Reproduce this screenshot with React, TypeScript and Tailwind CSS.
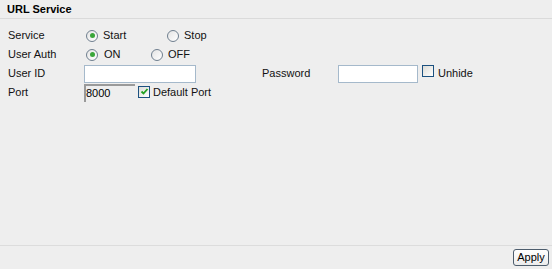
import React from "react";

function Radio({ checked }: { checked?: boolean }) {
  return (
    <span className="inline-flex w-[12px] h-[12px] rounded-full border border-[#6f7f8f] bg-gradient-to-br from-[#e4e4e4] to-white items-center justify-center shrink-0">
      {checked && <span className="w-[5px] h-[5px] rounded-full bg-[#3aa63a]" />}
    </span>
  );
}

function Check({ checked }: { checked?: boolean }) {
  return (
    <span className="inline-flex w-[12px] h-[12px] border border-[#1c5180] bg-gradient-to-br from-[#dcdcd7] to-white items-center justify-center shrink-0">
      {checked && (
        <svg width="9" height="9" viewBox="0 0 9 9">
          <path d="M1.5 4.5 L3.5 6.5 L7.5 2" stroke="#21a121" strokeWidth="1.8" fill="none" />
        </svg>
      )}
    </span>
  );
}

export default function App() {
  return (
    <div className="w-[559px] h-[271px] bg-white" style={{ fontFamily: '"Liberation Sans", Arial, sans-serif' }}>
      <div className="w-[552px] h-[269px] bg-[#eeeeee] flex flex-col text-[11px] text-[#111]">
        <div className="h-[19px] px-[7px] flex items-center font-bold border-b border-[#dadada] text-black">URL Service</div>
        <div className="flex-1 pt-[7px] px-[8px] flex flex-col">
          <div className="h-[19px] flex items-center">
            <span className="w-[78px]">Service</span>
            <Radio checked />
            <span className="ml-[5px] w-[64px]">Start</span>
            <Radio />
            <span className="ml-[5px]">Stop</span>
          </div>
          <div className="h-[19px] flex items-center">
            <span className="w-[78px]">User Auth</span>
            <Radio checked />
            <span className="ml-[6px] w-[47px]">ON</span>
            <Radio />
            <span className="ml-[5px]">OFF</span>
          </div>
          <div className="h-[19px] flex items-center">
            <span className="w-[76px]">User ID</span>
            <span className="w-[112px] h-[18px] bg-white border border-[#a5b9cb]" />
            <span className="ml-[66px] w-[76px]">Password</span>
            <span className="w-[80px] h-[18px] bg-white border border-[#a5b9cb]" />
            <span className="ml-[4px]"><Check /></span>
            <span className="ml-[4px]">Unhide</span>
          </div>
          <div className="h-[19px] flex items-center">
            <span className="w-[76px]">Port</span>
            <span className="w-[51px] h-[18px] border-t-2 border-l-2 border-t-[#9a9a9a] border-l-[#9a9a9a] flex items-center pl-[0px] text-black">8000</span>
            <span className="ml-[3px]"><Check checked /></span>
            <span className="ml-[3px]">Default Port</span>
          </div>
        </div>
        <div className="h-[24px] border-t border-[#dcdcdc] flex items-center justify-end pr-[3px]">
          <button className="w-[36px] h-[17px] rounded-[3px] border border-[#4d5d6d] bg-gradient-to-b from-white to-[#ececec] text-[11px] text-black leading-none flex items-center justify-center">Apply</button>
        </div>
      </div>
    </div>
  );
}
